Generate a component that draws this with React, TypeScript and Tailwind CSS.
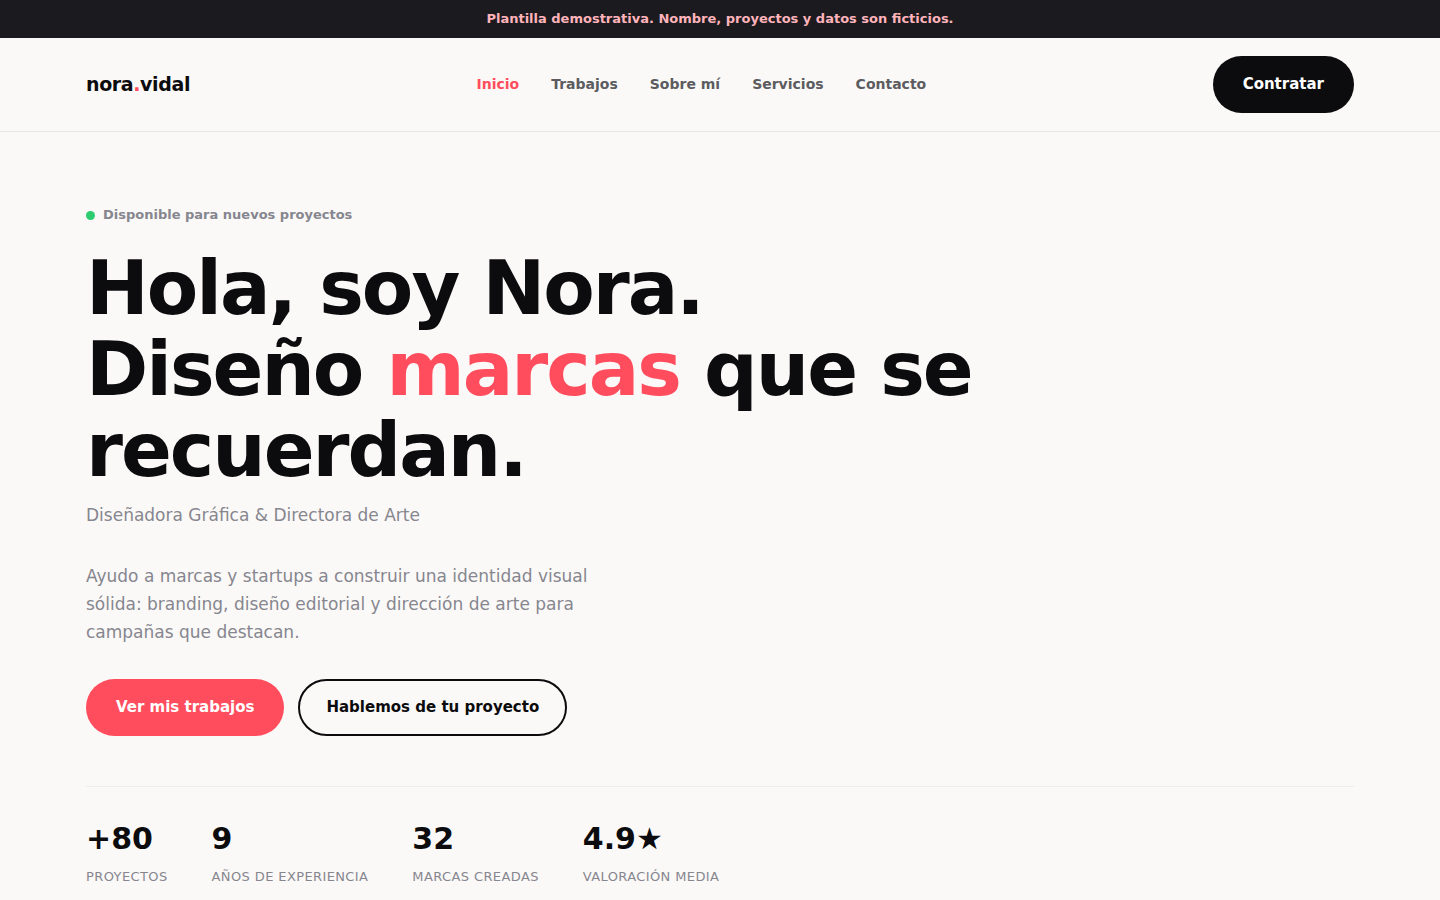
import { useState } from 'react';

const links = [
  { label: 'Inicio', href: '#inicio' },
  { label: 'Trabajos', href: '#trabajos' },
  { label: 'Sobre mí', href: '#sobre-mi' },
  { label: 'Servicios', href: '#servicios' },
  { label: 'Contacto', href: '#contacto' },
];

const stats = [
  { value: '+80', label: 'Proyectos' },
  { value: '9', label: 'Años de experiencia' },
  { value: '32', label: 'Marcas creadas' },
  { value: '4.9★', label: 'Valoración media' },
];

function Header() {
  const [active, setActive] = useState('Inicio');

  return (
    <header className="border-b border-[#e8e7e5]">
      <div className="mx-auto flex max-w-[1300px] items-center justify-between px-4 py-[18px]">
        <a href="#inicio" className="text-[19px] leading-[29px] font-bold tracking-[-0.02em]">
          nora<span className="text-[#ff4d5e]">.</span>vidal
        </a>
        <nav className="flex gap-8">
          {links.map((link) => (
            <a
              key={link.label}
              href={link.href}
              onClick={() => setActive(link.label)}
              className={`text-[14px] leading-[21px] font-semibold ${active === link.label ? 'text-[#ff4d5e]' : 'text-[#5c5c60]'}`}
            >
              {link.label}
            </a>
          ))}
        </nav>
        <button type="button" className="h-[57px] rounded-full bg-[#0c0c0f] px-[30px] text-[15px] font-bold text-white">
          Contratar
        </button>
      </div>
    </header>
  );
}

function Hero() {
  return (
    <main id="inicio" className="mx-auto max-w-[1300px] px-4 pt-[72px]">
      <p className="flex items-center gap-2 text-[13px] leading-[22px] font-semibold text-[#86868f]">
        <span className="size-[9px] rounded-full bg-[#2ecc71]" />
        Disponible para nuevos proyectos
      </p>
      <h1 className="mt-[22px] max-w-[950px] text-[75px] leading-[81px] font-extrabold tracking-[-2px]">
        Hola, soy Nora.
        <br />
        Diseño <span className="text-[#ff4d5e]">marcas</span> que se recuerdan.
      </h1>
      <p className="mt-[10px] text-[17px] leading-7 text-[#86868f]">Diseñadora Gráfica &amp; Directora de Arte</p>
      <p className="mt-[33px] max-w-[520px] text-[17px] leading-7 text-[#86868f]">
        Ayudo a marcas y startups a construir una identidad visual sólida: branding, diseño editorial y dirección de
        arte para campañas que destacan.
      </p>
      <div className="mt-[33px] flex gap-[14px]">
        <button type="button" className="h-[57px] rounded-full bg-[#ff4d5e] px-[30px] text-[15px] font-bold text-white">
          Ver mis trabajos
        </button>
        <button type="button" className="h-[57px] rounded-full border-2 border-[#0c0c0f] px-[26px] text-[15px] font-bold">
          Hablemos de tu proyecto
        </button>
      </div>
      <dl className="mt-[50px] flex gap-11 border-t border-[#ededeb] pt-[26px]">
        {stats.map((stat) => (
          <div key={stat.label} className="flex flex-col-reverse">
            <dt className="text-[13px] leading-6 tracking-[0.03em] text-[#86868f] uppercase">{stat.label}</dt>
            <dd className="text-[30px] leading-[52px] font-extrabold">{stat.value}</dd>
          </div>
        ))}
      </dl>
    </main>
  );
}

export default function App() {
  return (
    <div className="h-screen overflow-hidden bg-[#fbf9f7] font-['DejaVu_Sans',sans-serif] text-[#0c0c0f]">
      <div className="bg-[#1a1a1f] px-4 py-2 text-center text-[13px] leading-[22px] font-semibold text-[#ffb3ba]">
        Plantilla demostrativa. Nombre, proyectos y datos son ficticios.
      </div>
      <Header />
      <Hero />
    </div>
  );
}
